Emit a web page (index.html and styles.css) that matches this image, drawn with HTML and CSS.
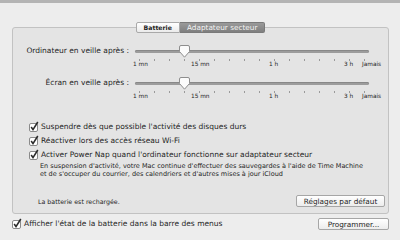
FILE: index.html
```html
<!DOCTYPE html>
<html lang="fr">
<head>
  <meta charset="UTF-8">
  <title>Économiseur d'énergie</title>
  <link rel="stylesheet" href="styles.css">
</head>
<body>
  <div class="tabs">
    <div class="tab">Batterie</div>
    <div class="tab tab-active">Adaptateur secteur</div>
  </div>

  <div class="group">
    <div class="slider-row">
      <div class="slider-label">Ordinateur en veille après :</div>
      <div class="slider">
        <div class="track"></div>
        <svg class="knob" style="left: 44px" width="11" height="13" viewBox="0 0 11 13">
          <path d="M2 0.5 H9 Q10.5 0.5 10.5 2 V6.5 L5.5 12.2 L0.5 6.5 V2 Q0.5 0.5 2 0.5 Z" fill="#fbfbfb" stroke="#8e8e8e"/>
        </svg>
        <div class="ticks">
          <i></i><i></i><i></i><i></i><i></i><i></i><i></i><i></i>
          <i></i><i></i><i></i><i></i><i></i><i></i><i></i><i></i>
        </div>
        <span class="mark" style="left: -2px">1 mn</span>
        <span class="mark" style="left: 56px">15 mn</span>
        <span class="mark" style="left: 134px">1 h</span>
        <span class="mark" style="left: 209px">3 h</span>
        <span class="mark" style="left: 227px">Jamais</span>
      </div>
    </div>

    <div class="slider-row">
      <div class="slider-label">Écran en veille après :</div>
      <div class="slider">
        <div class="track"></div>
        <svg class="knob" style="left: 44px" width="11" height="13" viewBox="0 0 11 13">
          <path d="M2 0.5 H9 Q10.5 0.5 10.5 2 V6.5 L5.5 12.2 L0.5 6.5 V2 Q0.5 0.5 2 0.5 Z" fill="#fbfbfb" stroke="#8e8e8e"/>
        </svg>
        <div class="ticks">
          <i></i><i></i><i></i><i></i><i></i><i></i><i></i><i></i>
          <i></i><i></i><i></i><i></i><i></i><i></i><i></i><i></i>
        </div>
        <span class="mark" style="left: -2px">1 mn</span>
        <span class="mark" style="left: 56px">15 mn</span>
        <span class="mark" style="left: 134px">1 h</span>
        <span class="mark" style="left: 209px">3 h</span>
        <span class="mark" style="left: 227px">Jamais</span>
      </div>
    </div>

    <div class="options">
      <label class="check">
        <svg class="box" width="11" height="11" viewBox="0 0 11 11">
          <rect x="0.5" y="2.5" width="8" height="8" rx="1.5" fill="#fff" stroke="#8a8a8a"/>
          <path d="M2.2 6 L4 8.6 L8.8 1" fill="none" stroke="#2b2b2b" stroke-width="1.6"/>
        </svg>
        Suspendre dès que possible l'activité des disques durs
      </label>
      <label class="check">
        <svg class="box" width="11" height="11" viewBox="0 0 11 11">
          <rect x="0.5" y="2.5" width="8" height="8" rx="1.5" fill="#fff" stroke="#8a8a8a"/>
          <path d="M2.2 6 L4 8.6 L8.8 1" fill="none" stroke="#2b2b2b" stroke-width="1.6"/>
        </svg>
        Réactiver lors des accès réseau Wi-Fi
      </label>
      <label class="check">
        <svg class="box" width="11" height="11" viewBox="0 0 11 11">
          <rect x="0.5" y="2.5" width="8" height="8" rx="1.5" fill="#fff" stroke="#8a8a8a"/>
          <path d="M2.2 6 L4 8.6 L8.8 1" fill="none" stroke="#2b2b2b" stroke-width="1.6"/>
        </svg>
        Activer Power Nap quand l'ordinateur fonctionne sur adaptateur secteur
      </label>
      <p class="hint">
        En suspension d'activité, votre Mac continue d'effectuer des sauvegardes à l'aide de Time Machine<br>
        et de s'occuper du courrier, des calendriers et d'autres mises à jour iCloud
      </p>
    </div>

    <div class="group-footer">
      <span class="status">La batterie est rechargée.</span>
      <button class="defaults">Réglages par défaut</button>
    </div>
  </div>

  <div class="footer">
    <label class="check">
      <svg class="box" width="11" height="11" viewBox="0 0 11 11">
        <rect x="0.5" y="2.5" width="8" height="8" rx="1.5" fill="#fff" stroke="#8a8a8a"/>
        <path d="M2.2 6 L4 8.6 L8.8 1" fill="none" stroke="#2b2b2b" stroke-width="1.6"/>
      </svg>
      Afficher l'état de la batterie dans la barre des menus
    </label>
    <button class="schedule">Programmer...</button>
  </div>
</body>
</html>
```

FILE: styles.css
```css
body {
  margin: 0;
  height: 237px;
  background: #ededed;
  border-top: 3px solid #b4b4b4;
  font-family: 'DejaVu Sans', sans-serif;
  font-size: 7.5px;
  color: #1e1e1e;
  overflow: hidden;
}
.tabs {
  display: flex;
  justify-content: center;
  margin-top: 19px;
  height: 11px;
  position: relative;
  z-index: 1;
  padding-left: 1px;
}
.tab {
  height: 9px;
  line-height: 9px;
  padding: 0 7px;
  border: 1px solid #a9a9a9;
  border-radius: 2px 0 0 2px;
  background: linear-gradient(#ffffff, #ebebeb);
  font-weight: bold;
  font-size: 6.2px;
}
.tab-active {
  border-radius: 0 2px 2px 0;
  border-left: none;
  border-color: #7a7a7a;
  background: linear-gradient(#9a9a9a, #7f7f7f);
  color: #f4f4f4;
  font-weight: normal;
  font-size: 7.3px;
}
.group {
  margin: -6px 11px 0 12px;
  border: 1px solid #c2c2c2;
  border-radius: 3px;
  background: #e4e4e4;
  padding: 16px 3px 6px 0;
}
.slider-row {
  display: flex;
  height: 32px;
}
.slider-label {
  width: 116px;
  text-align: right;
  line-height: 14px;
  margin-right: 6px;
  white-space: nowrap;
}
.slider {
  position: relative;
  width: 234px;
  height: 32px;
}
.track {
  margin-top: 6px;
  height: 3px;
  border-radius: 2px;
  background: #9c9c9c;
  box-shadow: inset 0 1px 0 #888;
}
.knob {
  position: absolute;
  top: 1px;
}
.ticks {
  display: flex;
  gap: 14px;
  margin: 6px 0 0 4px;
}
.ticks i {
  width: 1px;
  height: 2px;
  background: #9a9a9a;
}
.mark {
  position: absolute;
  top: 17px;
  font-size: 5.8px;
  white-space: nowrap;
}
.options {
  margin: 12px 0 0 16px;
}
.check {
  display: flex;
  align-items: center;
  gap: 1px;
  line-height: 14px;
  white-space: nowrap;
}
.box {
  flex: none;
  margin-top: -2px;
}
.hint {
  margin: 0 0 0 11px;
  font-size: 6.5px;
  line-height: 8px;
  white-space: nowrap;
}
.group-footer {
  display: flex;
  justify-content: space-between;
  align-items: center;
  margin: 17px 0 0 25px;
}
.status {
  font-size: 6.3px;
}
button {
  box-sizing: border-box;
  font-family: 'DejaVu Sans', sans-serif;
  font-size: 7.3px;
  color: #1e1e1e;
  height: 12px;
  padding: 0;
  border: 1px solid #a6a6a6;
  border-radius: 2px;
  background: linear-gradient(#ffffff, #ececec);
}
.defaults {
  width: 89px;
}
.schedule {
  width: 71px;
}
.footer {
  display: flex;
  justify-content: space-between;
  align-items: center;
  margin: 3px 11px 0 12px;
}
```
